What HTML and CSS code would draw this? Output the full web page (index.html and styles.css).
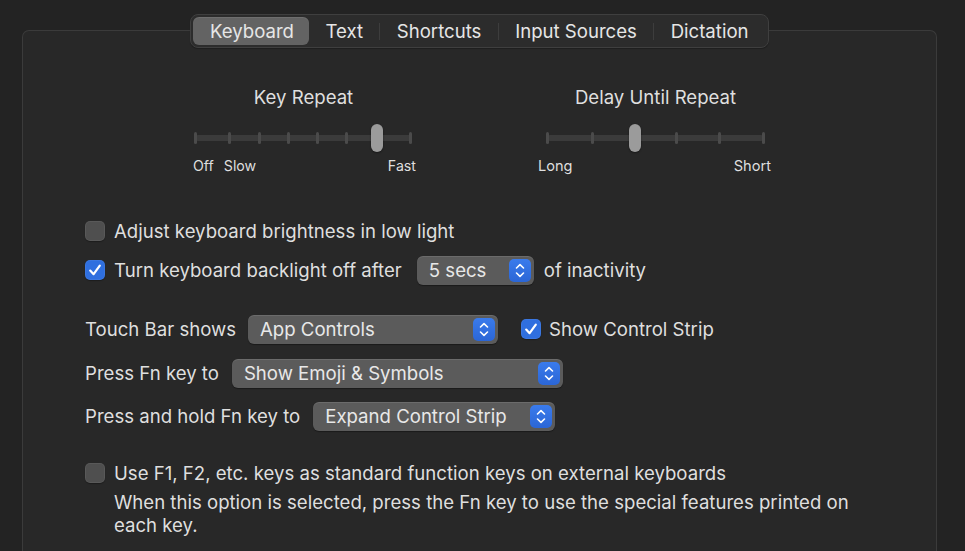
FILE: index.html
```html
<!DOCTYPE html>
<html>
<head>
<meta charset="utf-8">
<link rel="stylesheet" href="styles.css">
</head>
<body>
<div class="window">
  <nav class="tabs">
    <div class="tab selected">Keyboard</div>
    <div class="tab">Text</div>
    <div class="sep"></div>
    <div class="tab">Shortcuts</div>
    <div class="sep"></div>
    <div class="tab">Input Sources</div>
    <div class="sep"></div>
    <div class="tab">Dictation</div>
  </nav>
  <section class="panel">
    <div class="sliders">
      <div class="slider-group">
        <div class="slider-title">Key Repeat</div>
        <div class="slider">
          <div class="track"></div>
          <span class="tick" style="left:0px"></span>
          <span class="tick" style="left:34px"></span>
          <span class="tick" style="left:64px"></span>
          <span class="tick" style="left:93px"></span>
          <span class="tick" style="left:122px"></span>
          <span class="tick" style="left:151px"></span>
          <span class="tick" style="left:181px"></span>
          <span class="tick" style="left:215px"></span>
          <span class="thumb" style="left:176px"></span>
        </div>
        <div class="slider-labels kr">
          <span class="lbl-left"><span>Off</span><span>Slow</span></span>
          <span>Fast</span>
        </div>
      </div>
      <div class="slider-group">
        <div class="slider-title">Delay Until Repeat</div>
        <div class="slider">
          <div class="track"></div>
          <span class="tick" style="left:0px"></span>
          <span class="tick" style="left:45px"></span>
          <span class="tick" style="left:87px"></span>
          <span class="tick" style="left:129px"></span>
          <span class="tick" style="left:172px"></span>
          <span class="tick" style="left:216px"></span>
          <span class="thumb" style="left:82px"></span>
        </div>
        <div class="slider-labels dr">
          <span>Long</span>
          <span>Short</span>
        </div>
      </div>
    </div>

    <div class="options">
      <div class="row r1">
        <span class="checkbox"></span>
        <span class="text">Adjust keyboard brightness in low light</span>
      </div>
      <div class="row r2">
        <span class="checkbox checked"><svg viewBox="0 0 20 20" width="20" height="20"><path d="M5.2 10.6 L8.6 14.2 L14.8 5.6" fill="none" stroke="#fff" stroke-width="2.2" stroke-linecap="round" stroke-linejoin="round"/></svg></span>
        <span class="text">Turn keyboard backlight off after</span>
        <span class="popup w-secs"><span class="ptext">5 secs</span><span class="stepper"><svg viewBox="0 0 22 23" width="22" height="23"><path d="M7.5 9 L11 5.6 L14.5 9 M7.5 14 L11 17.4 L14.5 14" fill="none" stroke="#fff" stroke-width="1.6" stroke-linecap="round" stroke-linejoin="round"/></svg></span></span>
        <span class="text">of inactivity</span>
      </div>
      <div class="row r3">
        <span class="text">Touch Bar shows</span>
        <span class="popup w-app"><span class="ptext">App Controls</span><span class="stepper"><svg viewBox="0 0 22 23" width="22" height="23"><path d="M7.5 9 L11 5.6 L14.5 9 M7.5 14 L11 17.4 L14.5 14" fill="none" stroke="#fff" stroke-width="1.6" stroke-linecap="round" stroke-linejoin="round"/></svg></span></span>
        <span class="checkbox checked strip"><svg viewBox="0 0 20 20" width="20" height="20"><path d="M5.2 10.6 L8.6 14.2 L14.8 5.6" fill="none" stroke="#fff" stroke-width="2.2" stroke-linecap="round" stroke-linejoin="round"/></svg></span>
        <span class="text">Show Control Strip</span>
      </div>
      <div class="row r4">
        <span class="text">Press Fn key to</span>
        <span class="popup w-emoji"><span class="ptext">Show Emoji &amp; Symbols</span><span class="stepper"><svg viewBox="0 0 22 23" width="22" height="23"><path d="M7.5 9 L11 5.6 L14.5 9 M7.5 14 L11 17.4 L14.5 14" fill="none" stroke="#fff" stroke-width="1.6" stroke-linecap="round" stroke-linejoin="round"/></svg></span></span>
      </div>
      <div class="row r5">
        <span class="text">Press and hold Fn key to</span>
        <span class="popup w-expand"><span class="ptext">Expand Control Strip</span><span class="stepper"><svg viewBox="0 0 22 23" width="22" height="23"><path d="M7.5 9 L11 5.6 L14.5 9 M7.5 14 L11 17.4 L14.5 14" fill="none" stroke="#fff" stroke-width="1.6" stroke-linecap="round" stroke-linejoin="round"/></svg></span></span>
      </div>
      <div class="row r6">
        <span class="checkbox"></span>
        <span class="text">Use F1, F2, etc. keys as standard function keys on external keyboards</span>
      </div>
      <p class="desc">When this option is selected, press the Fn key to use the special features printed on each key.</p>
    </div>
  </section>
</div>
</body>
</html>
```
FILE: styles.css
```css
* { box-sizing: border-box; }
html, body {
  margin: 0;
  padding: 0;
  background: #232323;
  width: 965px;
  height: 551px;
  overflow: hidden;
}
body {
  font-family: Inter, "Noto Sans", sans-serif;
  font-size: 18.6px;
  color: #dfdfdf;
}
.window {
  padding: 14px 28px 0 22px;
  display: flex;
  flex-direction: column;
  align-items: stretch;
}
.tabs {
  align-self: flex-start;
  margin-left: 168px;
  position: relative;
  z-index: 2;
  display: flex;
  align-items: center;
  height: 34px;
  padding: 0 3px 0 2px;
  background: #2c2c2c;
  border: 1px solid #3f3f3f;
  border-radius: 8px;
  box-shadow: 0 1px 1px rgba(0,0,0,0.25);
}
.tab {
  height: 28px;
  line-height: 28px;
  padding: 0 16.4px;
  color: #e6e6e6;
  white-space: nowrap;
}
.tab.selected {
  background: #636363;
  border-radius: 6px;
  padding: 0 15px 0 17px;
  box-shadow: inset 0 1px 0 rgba(255,255,255,0.08);
}
.sep {
  width: 1px;
  height: 17px;
  background: #3d3d3d;
}
.panel {
  margin-top: -18px;
  background: #282828;
  border: 1px solid #3b3b3b;
  border-bottom: none;
  border-radius: 7px 7px 0 0;
  height: 540px;
  padding: 55px 0 0 62px;
}
.sliders {
  display: flex;
  justify-content: center;
  gap: 135px;
  margin-left: -62px;
}
.slider-group {
  width: 217px;
  display: flex;
  flex-direction: column;
  align-items: stretch;
}
.slider-title {
  text-align: center;
  line-height: 22px;
  height: 22px;
  white-space: nowrap;
  margin: 0 -40px;
}
.slider {
  position: relative;
  height: 30px;
  margin-top: 15px;
}
.track {
  position: absolute;
  left: 0;
  right: 0;
  top: 12px;
  height: 6px;
  background: #3b3b3b;
  border-radius: 3px;
}
.tick {
  position: absolute;
  top: 9px;
  width: 3px;
  height: 12px;
  margin-left: -1px;
  background: #4b4b4b;
  border-radius: 1.5px;
}
.thumb {
  position: absolute;
  top: 1px;
  width: 12px;
  height: 28px;
  background: #9b9b9b;
  border-radius: 6px;
  box-shadow: 0 1px 2px rgba(0,0,0,0.4);
}
.slider-labels {
  display: flex;
  justify-content: space-between;
  font-size: 14.2px;
  line-height: 18px;
  margin-top: 4px;
}
.slider-labels.kr { margin-left: -2px; margin-right: -4px; }
.slider-labels.dr { margin-left: -9px; margin-right: -7px; font-size: 14.6px; }
.lbl-left { display: flex; gap: 10px; }

.options {
  display: flex;
  flex-direction: column;
  margin-top: 41px;
}
.row {
  display: flex;
  align-items: center;
  height: 30px;
  white-space: nowrap;
}
.r2 { margin-top: 9px; }
.r3 { margin-top: 29px; }
.r4 { margin-top: 14px; }
.r5 { margin-top: 13px; }
.r6 { margin-top: 27px; }
.checkbox {
  width: 20px;
  height: 20px;
  border-radius: 5px;
  background: #4f4f4f;
  box-shadow: inset 0 0 0 1px rgba(255,255,255,0.06), 0 1px 1px rgba(0,0,0,0.3);
  margin-right: 9px;
  flex: none;
  display: flex;
}
.checkbox.checked {
  background: #2f6fdf;
}
.checkbox.strip { margin-left: 23px; margin-right: 8px; }
.popup {
  display: flex;
  align-items: center;
  justify-content: space-between;
  height: 29px;
  background: #5b5b5b;
  border-radius: 6px;
  padding: 0 3px 0 12px;
  box-shadow: inset 0 1px 0 rgba(255,255,255,0.1), 0 1px 1px rgba(0,0,0,0.35);
  color: #e8e8e8;
  flex: none;
}
.stepper {
  width: 22px;
  height: 23px;
  border-radius: 5px;
  background: linear-gradient(#3a7bec, #2b66d6);
  display: flex;
}
.r2 .popup { margin: 0 10px 0 15px; }
.r3 .popup { margin-left: 12px; }
.r4 .popup { margin-left: 13px; }
.r5 .popup { margin-left: 13px; }
.w-secs { width: 117px; }
.w-app { width: 250px; }
.w-emoji { width: 331px; }
.w-expand { width: 242px; }
.desc {
  margin: 3px 0 0 29px;
  line-height: 23px;
  width: 760px;
}
```
